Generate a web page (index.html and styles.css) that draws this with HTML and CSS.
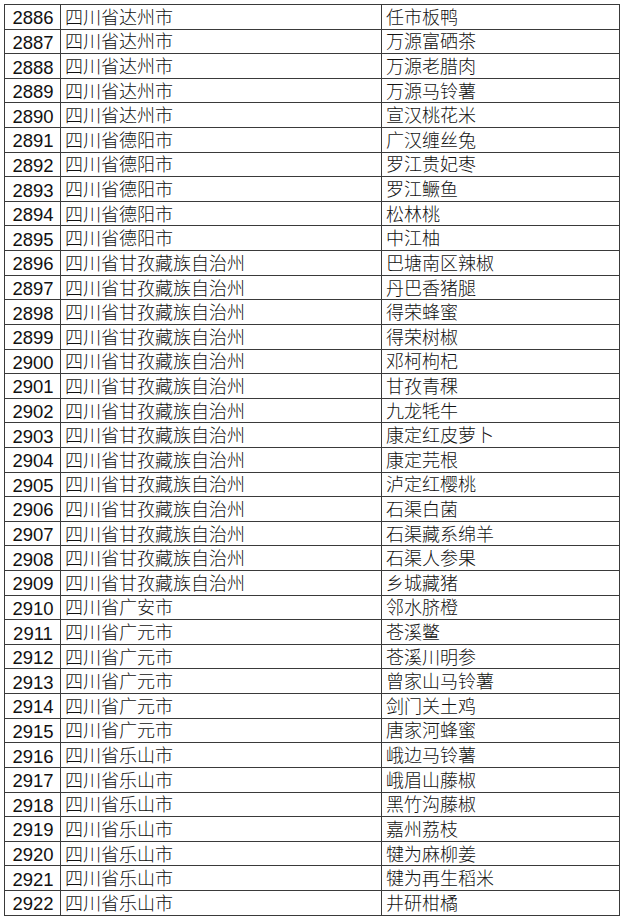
FILE: index.html
```html
<!DOCTYPE html>
<html lang="zh">
<head>
<meta charset="utf-8">
<link rel="stylesheet" href="styles.css">
</head>
<body>
<table class="list">
<colgroup><col class="c-no"><col class="c-region"><col class="c-name"></colgroup>
<tbody>
<tr><td class="no">2886</td><td>四川省达州市</td><td>任市板鸭</td></tr>
<tr><td class="no">2887</td><td>四川省达州市</td><td>万源富硒茶</td></tr>
<tr><td class="no">2888</td><td>四川省达州市</td><td>万源老腊肉</td></tr>
<tr><td class="no">2889</td><td>四川省达州市</td><td>万源马铃薯</td></tr>
<tr><td class="no">2890</td><td>四川省达州市</td><td>宣汉桃花米</td></tr>
<tr><td class="no">2891</td><td>四川省德阳市</td><td>广汉缠丝兔</td></tr>
<tr><td class="no">2892</td><td>四川省德阳市</td><td>罗江贵妃枣</td></tr>
<tr><td class="no">2893</td><td>四川省德阳市</td><td>罗江鳜鱼</td></tr>
<tr><td class="no">2894</td><td>四川省德阳市</td><td>松林桃</td></tr>
<tr><td class="no">2895</td><td>四川省德阳市</td><td>中江柚</td></tr>
<tr><td class="no">2896</td><td>四川省甘孜藏族自治州</td><td>巴塘南区辣椒</td></tr>
<tr><td class="no">2897</td><td>四川省甘孜藏族自治州</td><td>丹巴香猪腿</td></tr>
<tr><td class="no">2898</td><td>四川省甘孜藏族自治州</td><td>得荣蜂蜜</td></tr>
<tr><td class="no">2899</td><td>四川省甘孜藏族自治州</td><td>得荣树椒</td></tr>
<tr><td class="no">2900</td><td>四川省甘孜藏族自治州</td><td>邓柯枸杞</td></tr>
<tr><td class="no">2901</td><td>四川省甘孜藏族自治州</td><td>甘孜青稞</td></tr>
<tr><td class="no">2902</td><td>四川省甘孜藏族自治州</td><td>九龙牦牛</td></tr>
<tr><td class="no">2903</td><td>四川省甘孜藏族自治州</td><td>康定红皮萝卜</td></tr>
<tr><td class="no">2904</td><td>四川省甘孜藏族自治州</td><td>康定芫根</td></tr>
<tr><td class="no">2905</td><td>四川省甘孜藏族自治州</td><td>泸定红樱桃</td></tr>
<tr><td class="no">2906</td><td>四川省甘孜藏族自治州</td><td>石渠白菌</td></tr>
<tr><td class="no">2907</td><td>四川省甘孜藏族自治州</td><td>石渠藏系绵羊</td></tr>
<tr><td class="no">2908</td><td>四川省甘孜藏族自治州</td><td>石渠人参果</td></tr>
<tr><td class="no">2909</td><td>四川省甘孜藏族自治州</td><td>乡城藏猪</td></tr>
<tr><td class="no">2910</td><td>四川省广安市</td><td>邻水脐橙</td></tr>
<tr><td class="no">2911</td><td>四川省广元市</td><td>苍溪鳖</td></tr>
<tr><td class="no">2912</td><td>四川省广元市</td><td>苍溪川明参</td></tr>
<tr><td class="no">2913</td><td>四川省广元市</td><td>曾家山马铃薯</td></tr>
<tr><td class="no">2914</td><td>四川省广元市</td><td>剑门关土鸡</td></tr>
<tr><td class="no">2915</td><td>四川省广元市</td><td>唐家河蜂蜜</td></tr>
<tr><td class="no">2916</td><td>四川省乐山市</td><td>峨边马铃薯</td></tr>
<tr><td class="no">2917</td><td>四川省乐山市</td><td>峨眉山藤椒</td></tr>
<tr><td class="no">2918</td><td>四川省乐山市</td><td>黑竹沟藤椒</td></tr>
<tr><td class="no">2919</td><td>四川省乐山市</td><td>嘉州荔枝</td></tr>
<tr><td class="no">2920</td><td>四川省乐山市</td><td>犍为麻柳姜</td></tr>
<tr><td class="no">2921</td><td>四川省乐山市</td><td>犍为再生稻米</td></tr>
<tr><td class="no">2922</td><td>四川省乐山市</td><td>井研柑橘</td></tr>
</tbody>
</table>
</body>
</html>
```

FILE: styles.css
```css
html, body {
  margin: 0;
  padding: 0;
  background: #ffffff;
}

.list {
  margin: 4px 0 0 4px;
  border-collapse: collapse;
  table-layout: fixed;
  width: 615px;
  border: 1px solid #3a3a3a;
  color: #111;
  font-family: "Liberation Sans", "Noto Sans CJK SC", sans-serif;
  font-size: 18px;
  font-weight: 300;
}

.c-no { width: 56px; }
.c-region { width: 321px; }
.c-name { width: 238px; }

.list td {
  border: 1px solid #3a3a3a;
  height: 21.62px;
  padding: 2px 3px 0 4px;
  line-height: 18px;
  vertical-align: middle;
  white-space: nowrap;
  overflow: hidden;
}

.list td.no {
  text-align: center;
  padding: 3px 0 0 1px;
  height: 20.62px;
  font-size: 18.5px;
  font-weight: 400;
}
```
